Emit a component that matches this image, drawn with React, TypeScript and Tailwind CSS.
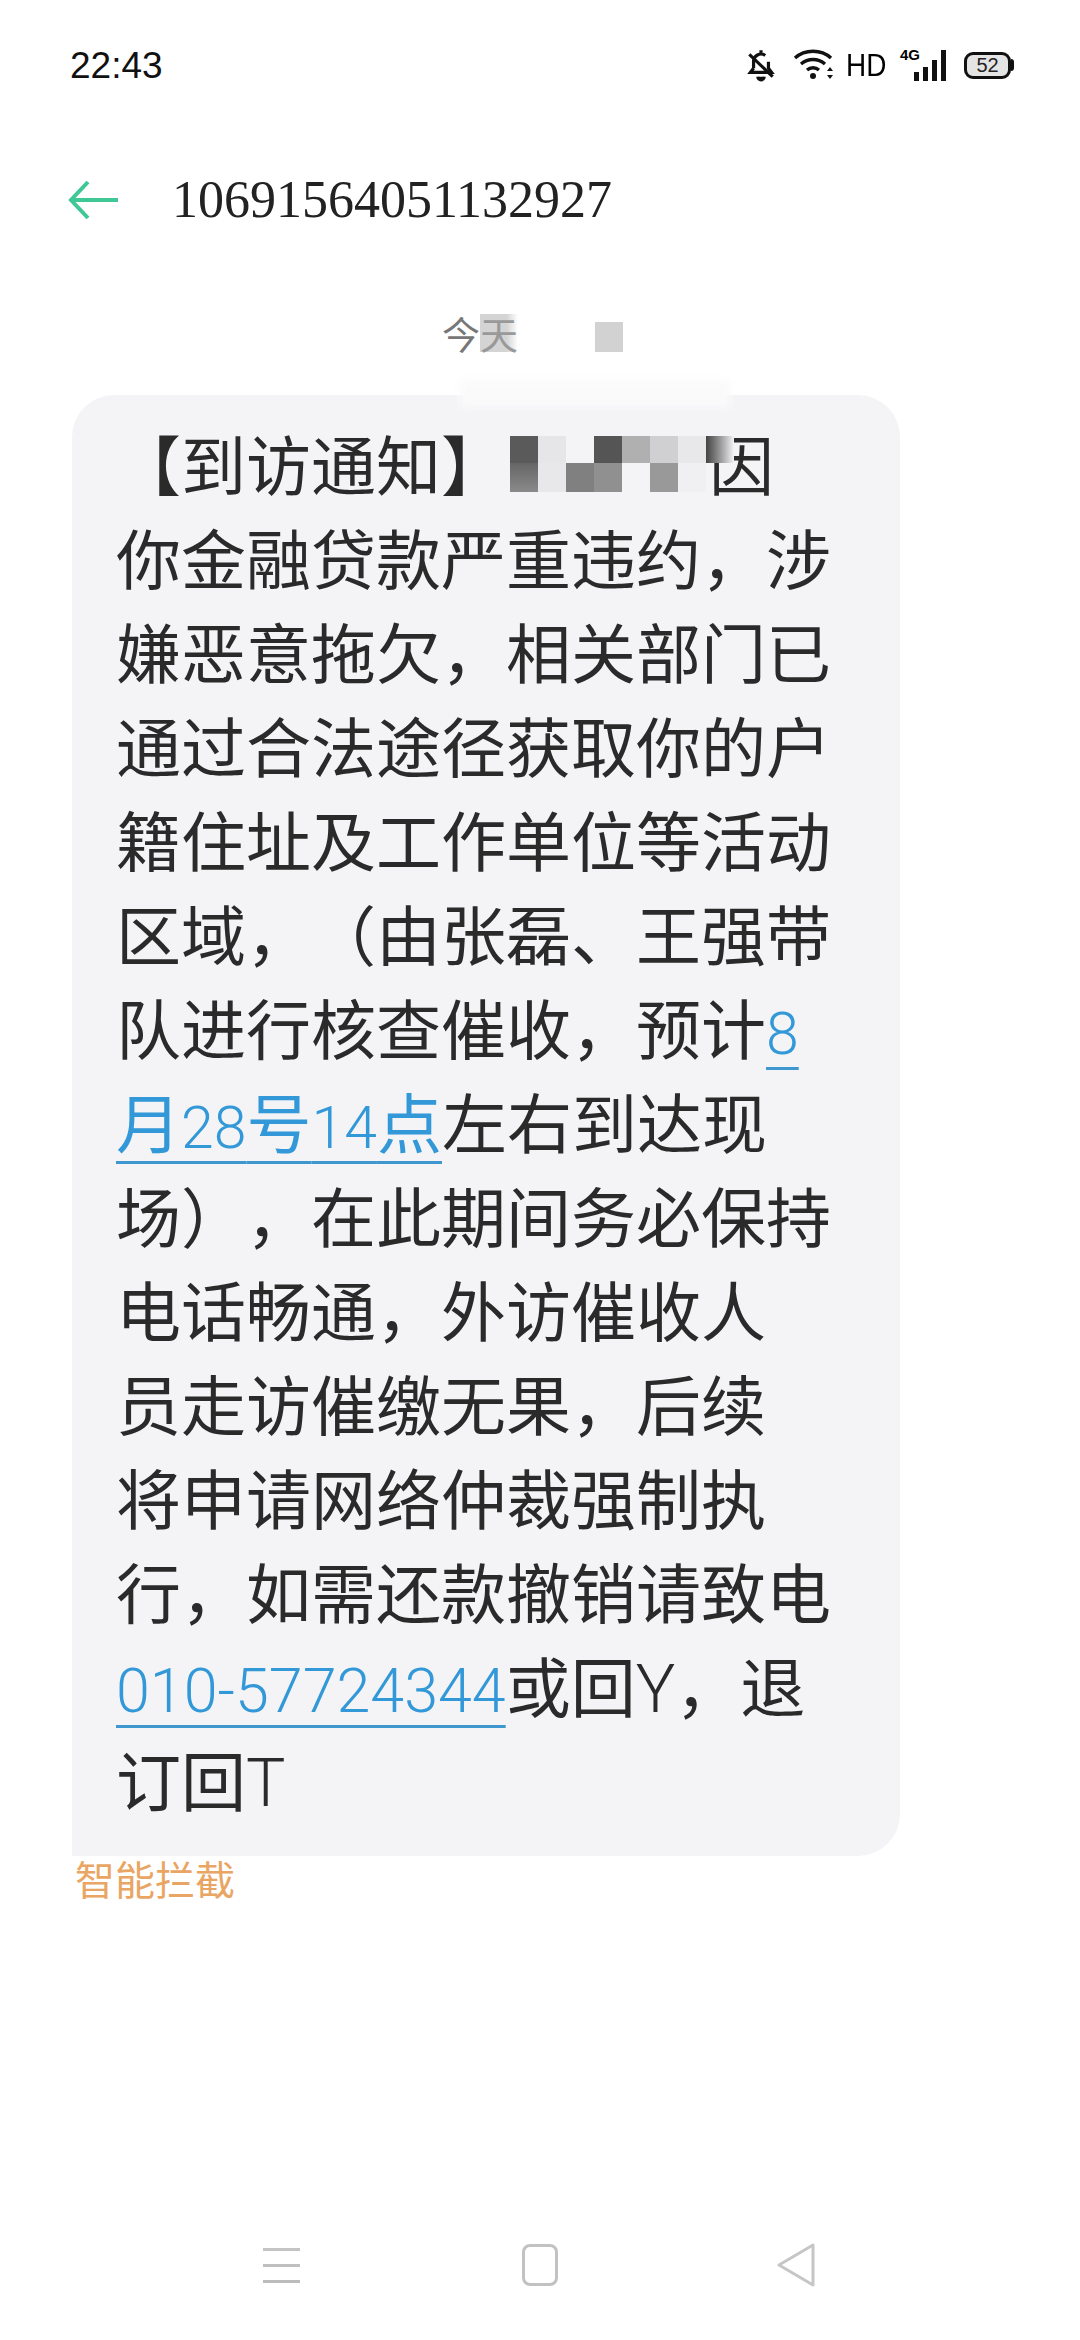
const cjk = "font-['Noto_Sans_CJK_SC',sans-serif]";

const mosaicCells = [
  'bg-[#5a5a5a]', 'bg-[#e6e6e8]', 'bg-[#f4f4f6]', 'bg-[#555555]', 'bg-[#b0b0b0]', 'bg-[#d0d0d2]', 'bg-[#e8e8ea]', 'bg-gradient-to-r from-[#444444] to-[#f4f4f6]',
  'bg-gradient-to-b from-[#666666] to-[#8a8a8a]', 'bg-[#e8e8ea]', 'bg-[#808080]', 'bg-[#909090]', 'bg-[#f4f4f6]', 'bg-[#999999]', 'bg-[#f0f0f2]', 'bg-transparent',
];

function Digits({ children }: { children: React.ReactNode }) {
  return <span className="font-['Roboto',sans-serif] font-light text-[59px] leading-none">{children}</span>;
}

function Phone({ children }: { children: React.ReactNode }) {
  return <span className="font-['Roboto',sans-serif] font-light text-[61px] leading-none">{children}</span>;
}

function Letter({ children }: { children: React.ReactNode }) {
  return <span className="font-['Roboto',sans-serif] font-light text-[66px] leading-none">{children}</span>;
}

function Link({ children }: { children: React.ReactNode }) {
  return (
    <span className="text-[#3298d8] underline decoration-[3px] decoration-[#3f97cf] underline-offset-[13px]">
      {children}
    </span>
  );
}

function StatusIcons() {
  return (
    <div className="flex items-center text-black">
      <svg width="32" height="34" viewBox="0 0 30 32" fill="none" stroke="#111" strokeWidth="3" className="mr-[16px]">
        <path d="M15 2v3M8 19V13a7 7 0 0 1 11-6M22 13v6l3 4H5l3-4" />
        <path d="M4 6l22 21" />
        <path d="M12 27a3 3 0 0 0 6 0" fill="#111" />
      </svg>
      <svg width="42" height="32" viewBox="0 0 42 32" fill="none" stroke="#111" strokeWidth="3.4" className="mr-[11px]">
        <path d="M2 9c10-9 26-9 36 0" />
        <path d="M8 15c7-6 17-6 24 0" />
        <path d="M14 21c3.500-3 8.500-3 12 0" />
        <circle cx="20" cy="27" r="3" fill="#111" stroke="none" />
        <path d="M37 18l-3 4h6zM37 30l-3-4h6z" fill="#111" stroke="none" />
      </svg>
      <span className="font-['Liberation_Sans',sans-serif] text-[31px] leading-none mr-[16px] scale-x-[0.9] origin-left w-[38px]">HD</span>
      <div className="relative w-[46px] h-[32px] mr-[18px]">
        <span className="absolute left-0 -top-[2px] font-['Liberation_Sans',sans-serif] font-bold text-[15px] leading-none">4G</span>
        <div className="absolute inset-0 flex items-end justify-end gap-[4px]">
          <div className="w-[5px] h-[9px] bg-[#111]" />
          <div className="w-[5px] h-[14px] bg-[#111]" />
          <div className="w-[5px] h-[21px] bg-[#111]" />
          <div className="w-[5px] h-[31px] bg-[#111]" />
        </div>
      </div>
      <div className="flex items-center">
        <div className="w-[47px] h-[27px] border-[3px] border-[#111] rounded-[9px] bg-[#e4e4e4] flex items-center justify-center font-['Liberation_Sans',sans-serif] text-[20px] leading-none text-[#222]">
          52
        </div>
        <div className="w-[3px] h-[12px] bg-[#111] rounded-r-[3px]" />
      </div>
    </div>
  );
}

export default function App() {
  return (
    <div className={`relative w-[1080px] h-[2340px] bg-white overflow-hidden flex flex-col ${cjk}`}>
      {/* status bar */}
      <div className="h-[130px] pl-[70px] pr-[66px] flex items-center justify-between">
        <span className="font-['Liberation_Sans',sans-serif] text-[37px] leading-none text-[#111]">22:43</span>
        <StatusIcons />
      </div>

      {/* header */}
      <div className="h-[140px] pl-[68px] flex items-center">
        <svg width="50" height="40" viewBox="0 0 50 40" fill="none" stroke="#3fc795" strokeWidth="4" className="mr-[54px]">
          <path d="M50 20H3" />
          <path d="M20 2L3 20l17 18" />
        </svg>
        <span className="font-['Liberation_Serif',serif] text-[52px] leading-none text-[#222]">10691564051132927</span>
      </div>

      {/* date */}
      <div className="h-[125px] pb-[43px] flex items-end pl-[442px]">
        <span className="text-[38px] leading-[38px] text-[#777777]">今</span>
        <span className="text-[38px] leading-[38px] text-[#999999] bg-gradient-to-r from-[#d4d4d4] from-70% to-white w-[38px]">天</span>
        <div className="w-[77px]" />
        <div className="w-[28px] h-[30px] bg-[#d2d2d2]" />
      </div>

      {/* message */}
      <div className="relative ml-[72px] w-[828px] h-[1461px] bg-[#f4f4f6] rounded-t-[42px] rounded-br-[42px] pl-[44px] pt-[20px] text-[65px] leading-[94px] text-[#2a2a2a] whitespace-nowrap [text-spacing-trim:space-all]">
        <div className="absolute left-[388px] -top-[15px] w-[270px] h-[28px] bg-[#fafafb] blur-[4px]" />
        <div>
          【到访通知】
          <span className="inline-grid align-top mt-[21px] ml-[4px] mr-[-25px] grid-cols-[repeat(8,28px)] grid-rows-[27px_29px] relative">
            {mosaicCells.map((cell, i) => (
              <span key={i} className={cell} />
            ))}
          </span>
          因
        </div>
        <div>你金融贷款严重违约，涉</div>
        <div>嫌恶意拖欠，相关部门已</div>
        <div>通过合法途径获取你的户</div>
        <div>籍住址及工作单位等活动</div>
        <div>区域，（由张磊、王强带</div>
        <div>
          队进行核查催收，预计<Link><Digits>8</Digits></Link>
        </div>
        <div>
          <Link>
            月<Digits>28</Digits>号<Digits>14</Digits>点
          </Link>
          左右到达现
        </div>
        <div>场），在此期间务必保持</div>
        <div>电话畅通，外访催收人</div>
        <div>员走访催缴无果，后续</div>
        <div>将申请网络仲裁强制执</div>
        <div>行，如需还款撤销请致电</div>
        <div>
          <Link>
            <Phone>010-57724344</Phone>
          </Link>
          或回<Letter>Y</Letter>，退
        </div>
        <div>
          订回<Letter>T</Letter>
        </div>
      </div>

      <div className="ml-[75px] mt-[2px] text-[40px] leading-[40px] text-[#e9a564]">智能拦截</div>

      {/* nav bar */}
      <div className="mt-auto h-[90px] mb-[30px] pl-[263px] flex items-center">
        <div className="w-[37px] flex flex-col gap-[13px] mr-[222px]">
          <div className="h-[3px] bg-[#c4c4c4]" />
          <div className="h-[3px] bg-[#c0c0c0]" />
          <div className="h-[3px] bg-[#bcbcbc]" />
        </div>
        <div className="w-[36px] h-[42px] border-[3px] border-[#c2c2c2] rounded-[8px] mr-[219px]" />
        <svg width="38" height="46" viewBox="0 0 38 46" fill="none" stroke="#c6c6c6" strokeWidth="3" strokeLinejoin="round">
          <path d="M36 3L2 23l34 20z" />
        </svg>
      </div>
    </div>
  );
}
